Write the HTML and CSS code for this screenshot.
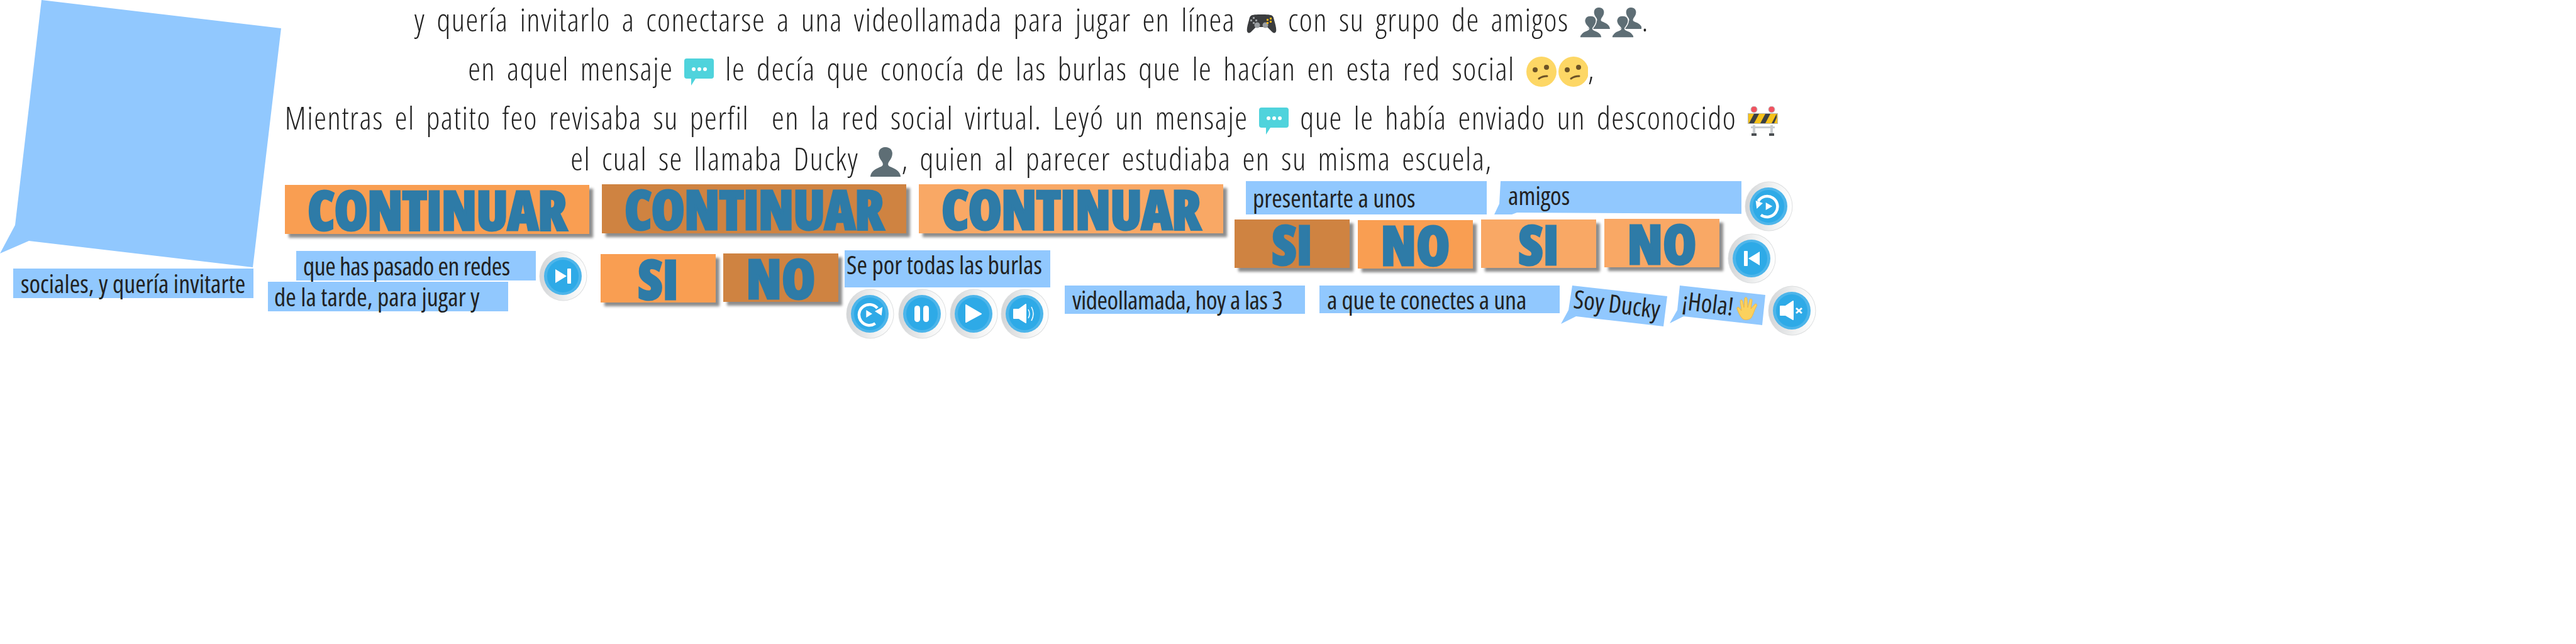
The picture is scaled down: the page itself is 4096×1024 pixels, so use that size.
FILE: index.html
```html
<!DOCTYPE html>
<html lang="es">
<head>
    <meta charset="UTF-8">
    <title>Patito feo - sprites</title>
    <link rel="stylesheet" href="styles.css">
</head>
<body>
    <svg class="defs" width="0" height="0">
        <defs>
            <linearGradient id="rim" x1="0" x2="1" y1="0" y2="0">
                <stop offset="0" stop-color="#d3d5d7"/>
                <stop offset="0.6" stop-color="#f1f2f2"/>
                <stop offset="1" stop-color="#ffffff"/>
            </linearGradient>
            <symbol id="disc" viewBox="0 0 77 80">
                <ellipse cx="38.5" cy="40" rx="38" ry="39.5" fill="#dcdedf"/>
                <ellipse cx="38.5" cy="40" rx="37" ry="38.5" fill="url(#rim)"/>
                <ellipse cx="38" cy="40" rx="30" ry="30" fill="#4db5ea"/>
                <ellipse cx="38" cy="40" rx="25" ry="26" fill="#2eaae7"/>
            </symbol>
            <symbol id="chat" viewBox="0 0 47 43">
                <path d="M4 0H43a4 4 0 0 1 4 4V28a4 4 0 0 1-4 4H18L11 43V32H4a4 4 0 0 1-4-4V4a4 4 0 0 1 4-4Z" fill="#4fd3dc"/>
                <circle cx="15" cy="17" r="3" fill="#fff"/>
                <circle cx="24" cy="17" r="3" fill="#fff"/>
                <circle cx="33" cy="17" r="3" fill="#fff"/>
            </symbol>
            <symbol id="person" viewBox="0 0 35 34">
                <path d="M0 34C1 27 6 25 13 22C15 21 15 19 13 16C10 12 9 8 10 5C11 1 15 0 17 0C20 0 24 1 25 5C26 8 25 12 22 16C20 19 20 21 22 22C29 25 34 27 35 34Z" fill="#5e6e75"/>
            </symbol>
            <symbol id="people" viewBox="0 0 48 48">
                <use href="#person" x="13" y="0" width="35" height="34"/>
                <path d="M0 48C0 41 6 38 12 36C15 35 15 33 13 31C9 27 7 22 8 19C9 15 13 13 17 13C21 13 25 15 26 19C27 23 25 27 22 31C20 33 20 35 23 36C29 38 35 41 35 48Z" fill="#5e6e75" stroke="#fff" stroke-width="1.5"/>
            </symbol>
            <symbol id="face" viewBox="0 0 48 48">
                <circle cx="24" cy="24" r="24" fill="#fdd765"/>
                <circle cx="14" cy="21" r="4" fill="#6d5326"/>
                <circle cx="32" cy="17" r="4" fill="#6d5326"/>
                <path d="M20 35C24 32 28 31 33 31" fill="none" stroke="#6d5326" stroke-width="3" stroke-linecap="round"/>
            </symbol>
        </defs>
    </svg>

    <main class="sheet">
        <div class="bubble bubble-big"></div>

        <section class="story">
            <p class="story-line line-one">y quería invitarlo a conectarse a una videollamada para jugar en línea
                <svg class="emoji emoji-pad" width="48" height="30" viewBox="0 0 48 30">
                    <path d="M9 1C16 -0.5 32 -0.5 39 1C42 2 43 4 44 9C46 16 48 23 47 27C46 30 43 30 41 28L33 20H15L7 28C5 30 2 30 1 27C0 23 2 16 4 9C5 4 6 2 9 1Z" fill="#3a3c3e"/>
                    <circle cx="17" cy="17" r="4.5" fill="#9a9ea1"/>
                    <circle cx="30" cy="17" r="4.5" fill="#9a9ea1"/>
                    <g fill="#9a9ea1"><rect x="10" y="4" width="3" height="3"/><rect x="6" y="8" width="3" height="3"/><rect x="14" y="8" width="3" height="3"/><rect x="10" y="12" width="3" height="3"/></g>
                    <g fill="#f5b21b"><rect x="37" y="5" width="3" height="3"/><rect x="32" y="7" width="3" height="3"/><rect x="37" y="10" width="3" height="3"/><rect x="32" y="12" width="3" height="3"/></g>
                </svg>
                con su grupo de amigos
                <svg class="emoji emoji-people" width="48" height="48"><use href="#people"/></svg><svg class="emoji emoji-people" width="50" height="48"><use href="#people" x="2"/></svg>.</p>
            <p class="story-line line-two">en aquel mensaje
                <svg class="emoji emoji-chat" width="47" height="43"><use href="#chat"/></svg>
                le decía que conocía de las burlas que le hacían en esta red social
                <svg class="emoji emoji-face" width="48" height="48"><use href="#face"/></svg><svg class="emoji emoji-face" width="50" height="48"><use href="#face" x="2"/></svg>,</p>
            <p class="story-line line-three">Mientras el patito feo revisaba su perfil &nbsp;en la red social virtual. Leyó un mensaje
                <svg class="emoji emoji-chat" width="47" height="43"><use href="#chat"/></svg>
                que le había enviado un desconocido
                <svg class="emoji emoji-sign" width="48" height="47" viewBox="0 0 48 47">
                    <rect x="8" y="30" width="4" height="15" fill="#c9cdd0"/>
                    <rect x="36" y="30" width="4" height="15" fill="#c9cdd0"/>
                    <rect x="5" y="32" width="38" height="3" fill="#c9cdd0"/>
                    <rect x="6" y="43" width="8" height="4" fill="#4b4f52"/>
                    <rect x="34" y="43" width="8" height="4" fill="#4b4f52"/>
                    <circle cx="10" cy="5" r="5" fill="#f2525f" stroke="#bcbcbc"/>
                    <circle cx="38" cy="5" r="5" fill="#f2525f" stroke="#bcbcbc"/>
                    <rect x="0.5" y="11.5" width="47" height="16" fill="#f7c21a" stroke="#b4b7ba"/>
                    <path d="M2 27L10 12H18L10 27ZM20 27L28 12H36L28 27ZM38 27L46 12V18L42 27Z" fill="#3c4043"/>
                </svg></p>
            <p class="story-line line-four">el cual se llamaba Ducky
                <svg class="emoji emoji-person" width="50" height="47" viewBox="0 0 35 34"><use href="#person"/></svg>, quien al parecer estudiaba en su misma escuela,</p>
        </section>

        <button class="plate wide plate-base cont-one"><span class="plate-word word-long">CONTINUAR</span></button>
        <button class="plate wide plate-down cont-two"><span class="plate-word word-long">CONTINUAR</span></button>
        <button class="plate wide plate-over cont-three"><span class="plate-word word-long">CONTINUAR</span></button>

        <button class="plate small plate-base si-one"><span class="plate-word">SI</span></button>
        <button class="plate small plate-down no-one"><span class="plate-word">NO</span></button>
        <button class="plate small plate-down si-two"><span class="plate-word">SI</span></button>
        <button class="plate small plate-base no-two"><span class="plate-word">NO</span></button>
        <button class="plate small plate-over si-three"><span class="plate-word">SI</span></button>
        <button class="plate small plate-over no-three"><span class="plate-word">NO</span></button>

        <div class="caption cap-sociales"><span>sociales, y quería invitarte</span></div>
        <div class="caption cap-pasado"><span>que has pasado en redes</span></div>
        <div class="caption cap-tarde"><span>de la tarde, para jugar y</span></div>
        <div class="caption cap-burlas"><span>Se por todas las burlas</span></div>
        <div class="caption cap-presentarte"><span>presentarte a unos</span></div>
        <div class="caption cap-amigos"><span>amigos</span></div>
        <div class="caption cap-video"><span>videollamada, hoy a las 3</span></div>
        <div class="caption cap-conectes"><span>a que te conectes a una</span></div>

        <div class="caption cap-ducky"><span>Soy Ducky</span></div>
        <div class="caption cap-hola"><span>¡Hola!</span>
            <svg class="hand" width="38" height="38" viewBox="0 0 38 38">
                <path d="M10 36C5 31 3 25 1 20C0 18 3 16 5 19L8 23L6 8C6 5 9 5 10 8L12 18L13 4C13 1 17 1 17 4L18 18L21 6C22 3 25 4 25 7L23 20L29 13C31 11 34 13 32 16C28 22 27 30 23 35C19 38 13 38 10 36Z" fill="#fbd15e" stroke="#f0b545"/>
            </svg>
        </div>

        <svg class="round rd-next" viewBox="0 0 77 80"><use href="#disc"/>
            <path d="M26 29L44 40L26 51Z" class="glyph"/><rect x="45" y="28" width="6" height="24" rx="1" class="glyph"/>
        </svg>
        <svg class="round rd-replay" viewBox="0 0 77 80"><use href="#disc"/>
            <path d="M46.7 55.3A16.5 16.5 0 1 1 50 31" class="glyph-line"/>
            <path d="M56.7 42.7L46 36L58.3 29Z" class="glyph"/><path d="M32.3 34L32.3 46L42 40Z" class="glyph"/>
        </svg>
        <svg class="round rd-pause" viewBox="0 0 77 80"><use href="#disc"/>
            <rect x="26" y="27" width="9" height="26" rx="4.5" class="glyph"/><rect x="40" y="27" width="9" height="26" rx="4.5" class="glyph"/>
        </svg>
        <svg class="round rd-play" viewBox="0 0 77 80"><use href="#disc"/>
            <path d="M26 26L50 40L26 53Z" class="glyph glyph-soft"/>
        </svg>
        <svg class="round rd-sound" viewBox="0 0 77 80"><use href="#disc"/>
            <path d="M21 33H29L40 25V54L29 47H21Z" class="glyph glyph-soft"/>
            <path d="M44 33Q48 40 44 47M49 29Q55 40 49 51" class="glyph-thin"/>
        </svg>
        <svg class="round rd-back" viewBox="0 0 77 80"><use href="#disc"/>
            <path d="M26 53.7A16.5 16.5 0 1 0 21.7 32" class="glyph-line"/>
            <path d="M17.7 31L29 35L19.3 44Z" class="glyph"/><path d="M33.7 34V46L44.3 40Z" class="glyph"/>
        </svg>
        <svg class="round rd-prev" viewBox="0 0 77 80"><use href="#disc"/>
            <path d="M51 29L33 40L51 51Z" class="glyph"/><rect x="26" y="28" width="6" height="24" rx="1" class="glyph"/>
        </svg>
        <svg class="round rd-mute" viewBox="0 0 77 80"><use href="#disc"/>
            <path d="M20 33H28L40 25V54L28 47H20Z" class="glyph glyph-soft"/>
            <path d="M45 36L54 44M54 36L45 44" class="glyph-cross"/>
        </svg>
    </main>
</body>
</html>
```

FILE: styles.css
```css
body {
    margin: 0;
    background-color: #ffffff;
}
.defs {
    position: absolute;
}
/* sprite sheet: everything on it sits at a fixed place on the canvas */
.sheet {
    position: relative;
    width: 4096px;
    height: 1024px;
    overflow: hidden;
    color: #222222;
    font-family: "Open Sans", sans-serif;
}
.sheet > * {
    position: absolute;
}
.bubble {
    background-color: #91c8fe;
}
.bubble-big {
    left: 0;
    top: 0;
    width: 447px;
    height: 425px;
    clip-path: polygon(66px 0, 447px 45px, 402px 425px, 46px 383px, 0 403px, 24px 358px);
}

/* story text */
.story {
    left: 455px;
    top: 0;
    width: 2370px;
    display: flex;
    flex-direction: column;
    align-items: center;
}
.story-line {
    margin: 0;
    height: 78px;
    line-height: 78px;
    font-size: 50px;
    font-weight: 300;
    font-stretch: 75%;
    white-space: nowrap;
    letter-spacing: 1.5px;
    word-spacing: 7px;
}
.line-one {
    height: 70px;
    line-height: 62px;
}
.line-four {
    margin-top: -13px;
}
.emoji {
    vertical-align: -8px;
}
.emoji-pad {
    vertical-align: -3px;
}
.emoji-people {
    vertical-align: -10px;
}
.emoji-chat {
    vertical-align: -8px;
}
.emoji-face {
    vertical-align: -10px;
}
.emoji-sign {
    vertical-align: -10px;
}
.emoji-person {
    vertical-align: -10px;
}

/* orange buttons */
.plate {
    display: flex;
    align-items: center;
    justify-content: center;
    padding: 0;
    border: none;
    color: #2e7ba7;
    font-family: "Open Sans", sans-serif;
    font-weight: 800;
    font-stretch: 75%;
    box-shadow: 6px 6px 4px rgba(0, 0, 0, 0.45);
}
.wide {
    height: 78px;
    width: 484px;
}
.small {
    height: 77px;
    width: 183px;
}
.plate-base {
    background-color: #f99e52;
}
.plate-down {
    background-color: #cf8341;
}
.plate-over {
    background-color: #f9a865;
}
.plate-word {
    font-size: 86px;
    line-height: 78px;
    -webkit-text-stroke: 3px #2e7ba7;
}
.word-long {
    letter-spacing: -1px;
}
.cont-one { left: 453px; top: 294px; }
.cont-two { left: 957px; top: 293px; }
.cont-three { left: 1461px; top: 293px; }
.si-one { left: 955px; top: 404px; }
.no-one { left: 1150px; top: 403px; }
.si-two { left: 1963px; top: 349px; }
.no-two { left: 2159px; top: 350px; }
.si-three { left: 2355px; top: 349px; }
.no-three { left: 2551px; top: 348px; }

/* captions */
.caption {
    display: flex;
    align-items: center;
    box-sizing: border-box;
    background-color: #91c8fe;
    font-size: 40px;
    font-weight: 400;
    font-stretch: 75%;
    white-space: nowrap;
}
.cap-sociales { left: 21px; top: 427px; width: 382px; height: 47px; padding-left: 12px; }
.cap-pasado { left: 471px; top: 399px; width: 381px; height: 47px; padding-left: 11px; letter-spacing: -0.6px; }
.cap-tarde { left: 426px; top: 448px; width: 382px; height: 47px; padding-left: 10px; }
.cap-burlas { left: 1343px; top: 398px; width: 327px; height: 59px; padding: 0 0 14px 3px; }
.cap-presentarte { left: 1981px; top: 288px; width: 383px; height: 53px; padding-left: 11px; }
.cap-amigos {
    left: 2376px;
    top: 288px;
    width: 393px;
    height: 53px;
    padding: 0 0 8px 22px;
    clip-path: polygon(10px 0, 393px 0, 393px 52px, 36px 50px, 28px 53px, 0 53px, 8px 36px);
}
.cap-video { left: 1693px; top: 454px; width: 382px; height: 45px; padding-left: 12px; letter-spacing: -0.5px; }
.cap-conectes { left: 2098px; top: 454px; width: 382px; height: 44px; padding-left: 12px; letter-spacing: -0.2px; }
.cap-ducky {
    left: 2482px;
    top: 454px;
    width: 169px;
    height: 65px;
    padding: 0 0 8px 20px;
    clip-path: polygon(18px 0, 169px 17px, 163px 65px, 24px 49px, 0 61px, 12px 39px);
}
.cap-ducky span {
    display: inline-block;
    transform: rotate(7deg);
}
.cap-hola {
    left: 2655px;
    top: 454px;
    width: 152px;
    height: 63px;
    padding: 0 0 8px 20px;
    clip-path: polygon(16px 0, 152px 15px, 147px 63px, 22px 49px, 0 60px, 12px 39px);
}
.cap-hola span {
    display: inline-block;
    transform: rotate(7deg);
}
.hand {
    margin-left: 4px;
    transform: translateY(8px);
}

/* round controls */
.round {
    width: 77px;
    height: 80px;
}
.glyph {
    fill: #ffffff;
}
.glyph-soft {
    stroke: #ffffff;
    stroke-width: 2;
    stroke-linejoin: round;
}
.glyph-line {
    fill: none;
    stroke: #ffffff;
    stroke-width: 4.5;
}
.glyph-thin {
    fill: none;
    stroke: #ffffff;
    stroke-width: 1.5;
}
.glyph-cross {
    fill: none;
    stroke: #ffffff;
    stroke-width: 3;
}
.rd-next { left: 857px; top: 399px; }
.rd-replay { left: 1345px; top: 459px; }
.rd-pause { left: 1428px; top: 459px; }
.rd-play { left: 1510px; top: 459px; }
.rd-sound { left: 1591px; top: 459px; }
.rd-back { left: 2774px; top: 288px; }
.rd-prev { left: 2747px; top: 371px; }
.rd-mute { left: 2811px; top: 454px; }
```
